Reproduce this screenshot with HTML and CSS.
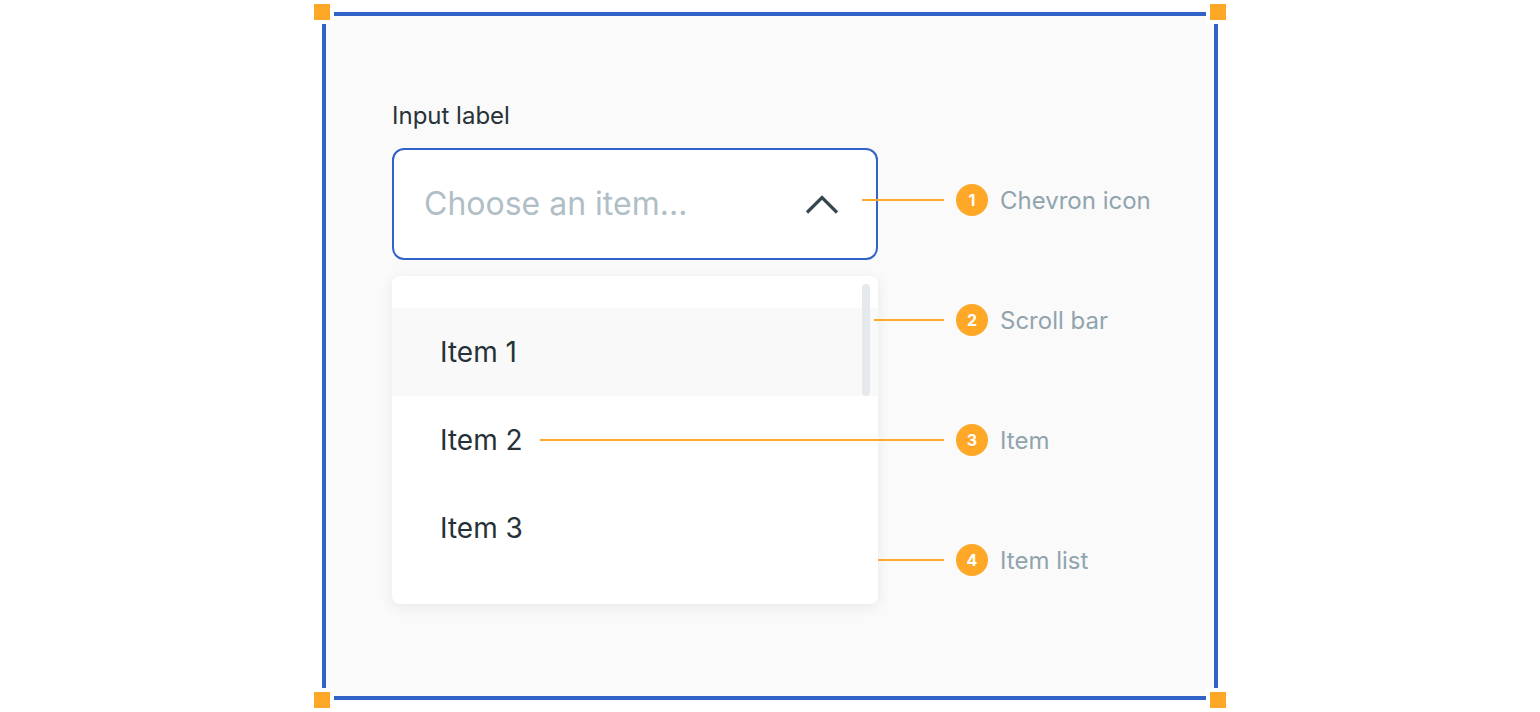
FILE: index.html
```html
<!DOCTYPE html>
<html lang="en">
<head>
<meta charset="utf-8">
<title>Select anatomy</title>
<link rel="stylesheet" href="styles.css">
</head>
<body>
<div class="frame">
  <span class="handle handle-tl"></span>
  <span class="handle handle-tr"></span>
  <span class="handle handle-bl"></span>
  <span class="handle handle-br"></span>

  <div class="field">
    <div class="field-label">Input label</div>
    <div class="select">
      <span class="placeholder">Choose an item...</span>
      <svg class="chevron" width="34" height="20" viewBox="0 0 34 20" aria-hidden="true">
        <polyline points="2,18.5 17,3.5 32,18.5" fill="none" stroke="#37474f" stroke-width="3.2"/>
      </svg>
    </div>
    <div class="menu">
      <div class="scrollbar"></div>
      <div class="item item-hover">Item 1</div>
      <div class="item">Item 2</div>
      <div class="item">Item 3</div>
    </div>
  </div>

  <div class="callouts">
    <div class="callout"><span class="line" style="width:82px"></span><span class="num">1</span><span class="callout-text">Chevron icon</span></div>
    <div class="callout"><span class="line" style="width:70px"></span><span class="num">2</span><span class="callout-text">Scroll bar</span></div>
    <div class="callout"><span class="line" style="width:404px"></span><span class="num">3</span><span class="callout-text">Item</span></div>
    <div class="callout"><span class="line" style="width:66px"></span><span class="num">4</span><span class="callout-text">Item list</span></div>
  </div>
</div>
</body>
</html>
```

FILE: styles.css
```css
* { box-sizing: border-box; }

html, body {
  margin: 0;
  padding: 0;
  background: #ffffff;
  font-family: Inter, "Noto Sans", "Liberation Sans", sans-serif;
}

body {
  width: 1540px;
  height: 712px;
  display: flex;
  align-items: center;
  justify-content: center;
}

.frame {
  position: relative;
  width: 896px;
  height: 688px;
  border: 4px solid #3062c8;
  background: #fafafa;
  display: flex;
  align-items: flex-start;
}

.handle {
  position: absolute;
  width: 24px;
  height: 24px;
  background: #ffa726;
  border: 4px solid #ffffff;
}
.handle-tl { left: -16px; top: -16px; }
.handle-tr { right: -16px; top: -16px; }
.handle-bl { left: -16px; bottom: -16px; }
.handle-br { right: -16px; bottom: -16px; }

.field {
  width: 486px;
  margin-left: 66px;
  padding-top: 86px;
  display: flex;
  flex-direction: column;
}

.field-label {
  font-size: 24px;
  line-height: 28px;
  color: #263238;
  margin-bottom: 18px;
}

.select {
  height: 112px;
  border: 2px solid #3062c8;
  border-radius: 12px;
  background: #ffffff;
  display: flex;
  align-items: center;
  justify-content: space-between;
  padding: 0 37px 0 30px;
}

.placeholder {
  font-size: 32px;
  color: #b0bec5;
  line-height: 40px;
}

.chevron { display: block; }

.menu {
  position: relative;
  margin-top: 16px;
  background: #ffffff;
  border-radius: 8px;
  padding: 32px 0;
  box-shadow: 0 3px 14px rgba(38, 50, 56, 0.09);
}

.scrollbar {
  position: absolute;
  top: 8px;
  right: 8px;
  width: 8px;
  height: 112px;
  border-radius: 4px;
  background: #e6e9ec;
}

.item {
  height: 88px;
  display: flex;
  align-items: center;
  padding-left: 48px;
  font-size: 28px;
  color: #263238;
}

.item-hover { background: #f9f9f9; }

.callouts {
  margin-left: 78px;
  padding-top: 168px;
  display: flex;
  flex-direction: column;
  gap: 88px;
}

.callout {
  position: relative;
  display: flex;
  align-items: center;
  height: 32px;
}

.line {
  position: absolute;
  left: -12px;
  top: 15px;
  height: 2px;
  background: #ffa726;
  transform: translateX(-100%);
}

.num {
  width: 32px;
  height: 32px;
  border-radius: 50%;
  background: #ffa726;
  color: #ffffff;
  font-size: 16px;
  font-weight: 700;
  display: flex;
  align-items: center;
  justify-content: center;
  margin-right: 12px;
}

.callout-text {
  font-size: 24px;
  color: #90a4ae;
}
```
